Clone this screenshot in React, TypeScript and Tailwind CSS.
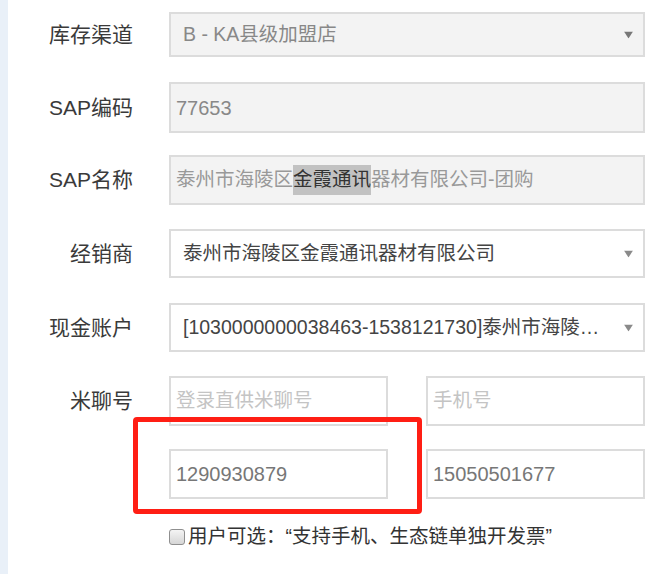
import React from "react";

const FONT = { fontFamily: '"Liberation Sans", "Noto Sans CJK SC", sans-serif' };

function Arrow({ light }: { light?: boolean }) {
  return (
    <svg width="9" height="7" viewBox="0 0 9 7" className="absolute right-[10px] top-1/2 -translate-y-1/2">
      <path d="M0 0H9L4.5 7Z" fill={light ? "#8a8a8a" : "#777"} />
    </svg>
  );
}

function Row({ label, children, h = "h-[50px]" }: { label?: string; children: React.ReactNode; h?: string }) {
  return (
    <div className={`flex items-center ${h}`}>
      <div className="w-[125px] shrink-0 text-right text-[21px] text-[#3a3a3a]">{label}</div>
      <div className="ml-[36px] w-[476px] h-full">{children}</div>
    </div>
  );
}

export default function App() {
  return (
    <div className="relative flex min-h-screen w-[666px] h-[574px] overflow-hidden bg-white" style={FONT}>
      <div className="w-[8px] shrink-0 bg-[#e9f0f8]" />

      <div className="flex flex-col pt-[12px]">
        {/* 库存渠道 */}
        <Row label="库存渠道" h="h-[45px]">
          <div className="relative flex h-full items-center border-2 border-[#dcdcdc] bg-[#f3f3f3] pl-[12px] text-[19.5px] text-[#888]">
            B - KA县级加盟店
            <Arrow />
          </div>
        </Row>

        <div className="mt-[25px]">
          <Row label="SAP编码" h="h-[51px]">
            <div className="flex h-full items-center border-2 border-[#dcdcdc] bg-[#f3f3f3] pl-[5px] text-[20px] text-[#888]">
              77653
            </div>
          </Row>
        </div>

        <div className="mt-[22px]">
          <Row label="SAP名称">
            <div className="flex h-full items-center border-2 border-[#dcdcdc] bg-[#f3f3f3] pl-[5px] text-[19.5px] text-[#999]">
              泰州市海陵区<span className="bg-[#c2c2c2] text-[#333]">金霞通讯</span>器材有限公司-团购
            </div>
          </Row>
        </div>

        <div className="mt-[24px]">
          <Row label="经销商" h="h-[49px]">
            <div className="relative flex h-full items-center border-2 border-[#dcdcdc] bg-white pl-[12px] text-[19.5px] text-[#444]">
              泰州市海陵区金霞通讯器材有限公司
              <Arrow light />
            </div>
          </Row>
        </div>

        <div className="mt-[25px]">
          <Row label="现金账户" h="h-[49px]">
            <div className="relative flex h-full items-center border-2 border-[#dcdcdc] bg-white pl-[12px] pr-[26px] text-[19.5px] text-[#444]">
              <span className="truncate">[1030000000038463-1538121730]泰州市海陵…</span>
              <Arrow light />
            </div>
          </Row>
        </div>

        <div className="mt-[24px]">
          <Row label="米聊号">
            <div className="flex h-full gap-[38px]">
              <div className="flex w-[219px] items-center border-2 border-[#dcdcdc] pl-[5px] text-[19.5px] text-[#c4c4c4]">
                登录直供米聊号
              </div>
              <div className="flex w-[219px] items-center border-2 border-[#dcdcdc] pl-[5px] text-[19.5px] text-[#c4c4c4]">
                手机号
              </div>
            </div>
          </Row>
        </div>

        <div className="mt-[23px]">
          <Row>
            <div className="flex h-full gap-[38px]">
              <div className="flex w-[219px] items-center border-2 border-[#dcdcdc] pl-[5px] text-[20px] text-[#777]">
                1290930879
              </div>
              <div className="flex w-[219px] items-center border-2 border-[#dcdcdc] pl-[5px] text-[20px] text-[#777]">
                15050501677
              </div>
            </div>
          </Row>
        </div>

        <div className="mt-[23px] ml-[161px] flex items-center gap-[3px] text-[19.5px] text-[#333]">
          <span className="h-[16px] w-[16px] shrink-0 rounded-[3px] border border-[#8f8f8f] bg-gradient-to-b from-[#f4f4f4] to-[#d6d6d6]" />
          <span>用户可选：“支持手机、生态链单独开发票”</span>
        </div>
      </div>

      {/* 标注框 */}
      <div className="pointer-events-none absolute left-[133px] top-[417px] h-[97px] w-[289px] rounded-[4px] border-[5px] border-[#ff1e14]" />
    </div>
  );
}
